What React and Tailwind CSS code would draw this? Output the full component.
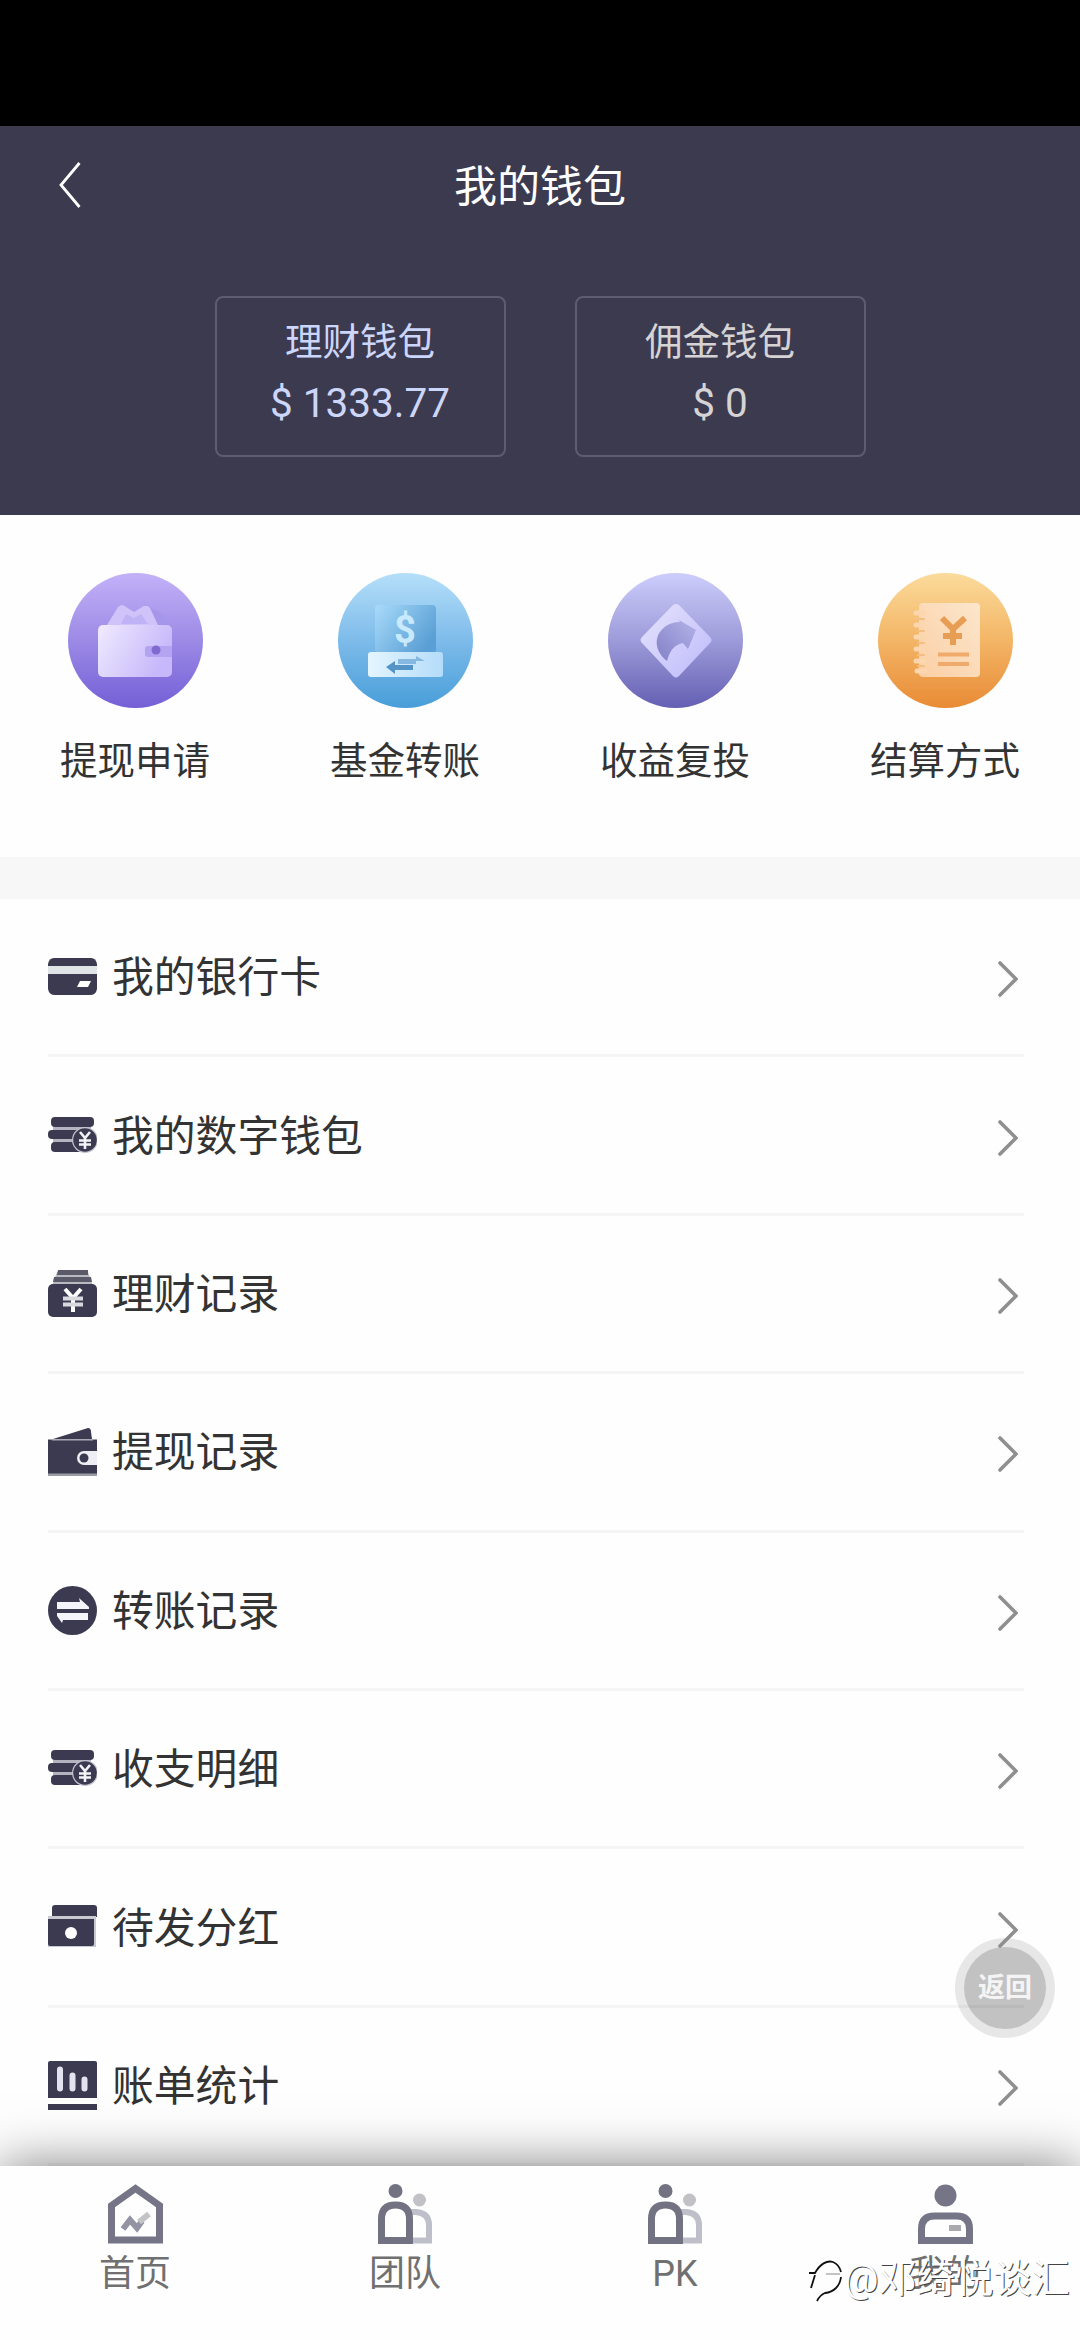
import React from 'react';

const DARK = '#3b3a50';

const WithdrawIcon = () => (
  <svg viewBox="0 0 135 135" className="w-[135px] h-[135px]">
    <defs>
      <linearGradient id="wBg" x1="0" y1="0" x2="0" y2="1">
        <stop offset="0" stopColor="#c3b1f8" />
        <stop offset="0.5" stopColor="#9c8ae6" />
        <stop offset="1" stopColor="#745fd6" />
      </linearGradient>
      <linearGradient id="wBody" x1="0" y1="0" x2="1" y2="0.4">
        <stop offset="0" stopColor="#f0ebff" />
        <stop offset="1" stopColor="#c6b8fa" />
      </linearGradient>
    </defs>
    <circle cx="67.5" cy="67.5" r="67.5" fill="url(#wBg)" />
    <path d="M76 31l20 11 4 9H84z" fill="#a696ea" />
    <path d="M39 52l11-18q4-4 8 0l8 5 8-5q5-3 8 1l8 17z" fill="#cfc3fa" />
    <path d="M53 51l5-10 8 4 7-4 7 10z" fill="#c0b3f5" />
    <rect x="30" y="52" width="74" height="52" rx="5" fill="url(#wBody)" />
    <path d="M80 73h24v11H80q-3 0-3-3v-5q0-3 3-3z" fill="#b3a3f0" />
    <circle cx="88" cy="77" r="4.5" fill="#8069cf" />
  </svg>
);

const TransferIcon = () => (
  <svg viewBox="0 0 135 135" className="w-[135px] h-[135px]">
    <defs>
      <linearGradient id="tBg" x1="0" y1="0" x2="0" y2="1">
        <stop offset="0" stopColor="#b5dff9" />
        <stop offset="0.5" stopColor="#7dbbea" />
        <stop offset="1" stopColor="#489ed9" />
      </linearGradient>
      <linearGradient id="tCard" x1="0" y1="0" x2="1" y2="0.6">
        <stop offset="0" stopColor="#a9dbfa" />
        <stop offset="1" stopColor="#5a9fd5" />
      </linearGradient>
      <linearGradient id="tBar" x1="0" y1="0" x2="1" y2="0">
        <stop offset="0" stopColor="#e5f5ff" />
        <stop offset="1" stopColor="#b4dcfa" />
      </linearGradient>
    </defs>
    <circle cx="67.5" cy="67.5" r="67.5" fill="url(#tBg)" />
    <rect x="37" y="32" width="61" height="48" rx="4" fill="url(#tCard)" />
    <text
      x="67"
      y="70"
      textAnchor="middle"
      className="font-['Roboto',sans-serif] font-bold text-[38px]"
      fill="#c9eafc"
    >
      $
    </text>
    <rect x="30" y="79" width="75" height="25" rx="3" fill="url(#tBar)" />
    <path d="M48 94l9-6v4h18v5H57v4z" fill="#5594c6" />
    <path d="M60 86h18v-3l9 5h-9v3H60z" fill="#86b9e2" />
  </svg>
);

const ReinvestIcon = () => (
  <svg viewBox="0 0 135 135" className="w-[135px] h-[135px]">
    <defs>
      <linearGradient id="rBg" x1="0" y1="0" x2="0" y2="1">
        <stop offset="0" stopColor="#cdcdfc" />
        <stop offset="0.5" stopColor="#9d9bd9" />
        <stop offset="1" stopColor="#645fb3" />
      </linearGradient>
      <linearGradient id="rBox" x1="0" y1="0" x2="1" y2="1">
        <stop offset="0" stopColor="#e6e4fc" />
        <stop offset="1" stopColor="#bdb9fb" />
      </linearGradient>
      <linearGradient id="rArrow" x1="0" y1="1" x2="1" y2="0">
        <stop offset="0" stopColor="#8480c6" />
        <stop offset="1" stopColor="#b3b3e8" />
      </linearGradient>
    </defs>
    <circle cx="67.5" cy="67.5" r="67.5" fill="url(#rBg)" />
    <path
      d="M65 32q3-2 6 0l31 32q3 3 0 6l-31 33q-3 3-6 0L34 70q-3-3 0-6z"
      fill="url(#rBox)"
    />
    <path d="M59 88C46 78 45 62 58 53q6-4 14-4l-1-2 17 10-8 19-5-6q-12 2-16 18z" fill="url(#rArrow)" />
  </svg>
);

const SettleIcon = () => (
  <svg viewBox="0 0 135 135" className="w-[135px] h-[135px]">
    <defs>
      <linearGradient id="sBg" x1="0" y1="0" x2="0" y2="1">
        <stop offset="0" stopColor="#fbdb9b" />
        <stop offset="0.5" stopColor="#f3b566" />
        <stop offset="1" stopColor="#e98b35" />
      </linearGradient>
      <linearGradient id="sBook" x1="1" y1="0" x2="0" y2="1">
        <stop offset="0" stopColor="#fce6cc" />
        <stop offset="1" stopColor="#fbcfa5" />
      </linearGradient>
    </defs>
    <circle cx="67.5" cy="67.5" r="67.5" fill="url(#sBg)" />
    <rect x="41" y="30" width="61" height="74" rx="4" fill="url(#sBook)" />
    <g stroke="#fbd6ae" strokeWidth="5" strokeLinecap="round">
      <path d="M38 40h8M38 52h8M38 64h8M38 76h8M38 88h8M39 98h8" />
    </g>
    <g stroke="#f5bf83" strokeWidth="2" strokeLinecap="round">
      <path d="M40 46h6M40 58h6M40 70h6M40 82h6M40 93h6" />
    </g>
    <path
      d="M64 45l11 11 12-11M75 56v16M65 63h19"
      fill="none"
      stroke="#e79d54"
      strokeWidth="6"
    />
    <path d="M60 81.5h31M60 91h31" stroke="#f0ab6c" strokeWidth="4" />
  </svg>
);

const CardIcon = () => (
  <svg viewBox="0 0 49 49" className="w-[49px] h-[49px] shrink-0">
    <path d="M0 12q1-6 6-6h37q5 0 6 6v2H0z" fill={DARK} />
    <path d="M0 22h49v15q-1 6-7 6H7q-6 0-7-6z" fill={DARK} />
    <path d="M0 14h49v8H0z" fill="#dfe5e6" />
    <path d="M32 29h11l-3 6H29z" fill="#fff" />
  </svg>
);

const CoinsIcon = () => (
  <svg viewBox="0 0 49 49" className="w-[49px] h-[49px] shrink-0">
    <path d="M5 12h38v26H5z" fill="#b4b4c0" />
    <rect x="3" y="6" width="43" height="10" rx="4" fill={DARK} />
    <rect x="0" y="19" width="38" height="9" rx="4" fill={DARK} />
    <rect x="3" y="31" width="38" height="10" rx="4" fill={DARK} />
    <circle cx="37" cy="29" r="13" fill="#c4c4d0" />
    <circle cx="37" cy="29" r="11.800" fill={DARK} />
    <path d="M32 21l5 6 5-6M37 27v11M31 29.500h12M31 33.500h12" fill="none" stroke="#f2f2f7" strokeWidth="2.600" />
  </svg>
);

const FinanceIcon = () => (
  <svg viewBox="0 0 49 49" className="w-[49px] h-[49px] shrink-0">
    <path d="M9 3h31l5 14H4z" fill="#b9b9c2" />
    <path d="M10 1h30v5H9zM6 8h37l1 5H5z" fill="#5b5a69" />
    <rect x="0" y="15" width="49" height="33" rx="5" fill={DARK} />
    <path d="M17 20l8 9 8-9M25 28v15" fill="none" stroke="#fff" strokeWidth="4" />
    <path d="M15 29.500h20M15 35.500h20" stroke="#d8d8df" strokeWidth="4" />
  </svg>
);

const PurseIcon = () => (
  <svg viewBox="0 0 49 49" className="w-[49px] h-[49px] shrink-0">
    <path d="M5 12L40 1q3 0 3 4l1 7z" fill={DARK} />
    <path d="M0 12.500h49V49H0z" fill={DARK} />
    <path d="M4 12h41v1.500H4z" fill="#a9a9b5" />
    <path d="M0 46.500h49v2.500H0z" fill="#9b9ba3" />
    <path d="M49 24H36a7 7 0 0 0 0 14h13z" fill="#eeeef4" />
    <circle cx="36" cy="31" r="4.500" fill={DARK} />
  </svg>
);

const SwapIcon = () => (
  <svg viewBox="0 0 49 49" className="w-[49px] h-[49px] shrink-0">
    <circle cx="24.500" cy="24.500" r="24.500" fill={DARK} />
    <path d="M9 16h23l-1-4 10 9v2H9zM9 27h31v7H15l-1 3-5-7z" fill="#f4f4fa" />
  </svg>
);

const PendingIcon = () => (
  <svg viewBox="0 0 49 49" className="w-[49px] h-[49px] shrink-0">
    <path d="M4 5q0-3 3-3h39q3 0 3 3v9H4z" fill={DARK} />
    <path d="M0 13h48v31H0z" fill="#c9c9d2" />
    <path d="M0 16h46v25q0 2-2 2H2q-2 0-2-2z" fill={DARK} />
    <circle cx="23" cy="30" r="6" fill="#fff" />
  </svg>
);

const StatsIcon = () => (
  <svg viewBox="0 0 49 49" className="w-[49px] h-[49px] shrink-0">
    <path d="M0 2q0-2 2-2h45q2 0 2 2v35H0zM0 43h49v6H0z" fill={DARK} />
    <path d="M12 8.500v19M24.500 14.500v13M36.500 18.500v9" stroke="#e3e3f0" strokeWidth="6" strokeLinecap="round" />
  </svg>
);

const HomeIcon = () => (
  <svg viewBox="0 0 55 60" className="w-[55px] h-[60px]">
    <path d="M3.500 21.500L27.500 4.500 51.500 21.500V56h-48z" fill="none" stroke="#767587" strokeWidth="7" />
    <path d="M15 45l7-9 7 8 5-7" fill="none" stroke="#9493a4" strokeWidth="6" />
    <path d="M31 38l10-8" stroke="#c4c4c8" strokeWidth="6" />
  </svg>
);

const TeamIcon = () => (
  <svg viewBox="0 0 55 60" className="w-[55px] h-[60px]">
    <circle cx="41.500" cy="16" r="6.500" fill="#c1c1c6" />
    <path d="M32 28h6q13 1 13 13v15.500H32" fill="none" stroke="#bfbfc9" strokeWidth="6" />
    <circle cx="17.500" cy="7" r="7" fill="#737283" />
    <path d="M3.500 56.500V35q0-14 14-14t14 14v21.500z" fill="#fff" stroke="#737283" strokeWidth="7" />
  </svg>
);

const MineIcon = () => (
  <svg viewBox="0 0 55 60" className="w-[55px] h-[60px]">
    <circle cx="27.500" cy="11.500" r="11" fill="#767587" />
    <path d="M3.500 56.500V45q0-13 13-13h22q13 0 13 13v11.500z" fill="none" stroke="#767587" strokeWidth="7" />
    <path d="M31 44h12" stroke="#a9a9ae" strokeWidth="6" />
  </svg>
);

const Chevron = () => (
  <svg viewBox="0 0 20 36" className="z-20 mt-[5px] w-5 h-9 shrink-0">
    <path d="M2 2l16 16L2 34" fill="none" stroke="#8f8f8f" strokeWidth="3.600" strokeLinecap="round" />
  </svg>
);

const wallets = [
  { name: '理财钱包', amount: '$ 1333.77', color: 'text-[#ccd6fa]' },
  { name: '佣金钱包', amount: '$ 0', color: 'text-[#d5d3d4]' },
];

const actions = [
  { name: '提现申请', icon: WithdrawIcon },
  { name: '基金转账', icon: TransferIcon },
  { name: '收益复投', icon: ReinvestIcon },
  { name: '结算方式', icon: SettleIcon },
];

const menu = [
  { name: '我的银行卡', icon: CardIcon },
  { name: '我的数字钱包', icon: CoinsIcon },
  { name: '理财记录', icon: FinanceIcon },
  { name: '提现记录', icon: PurseIcon },
  { name: '转账记录', icon: SwapIcon },
  { name: '收支明细', icon: CoinsIcon },
  { name: '待发分红', icon: PendingIcon },
  { name: '账单统计', icon: StatsIcon },
];

const tabs = [
  { name: '首页', icon: HomeIcon },
  { name: '团队', icon: TeamIcon },
  { name: 'PK', icon: TeamIcon },
  { name: '我的', icon: MineIcon },
];

const App = () => {
  return (
    <div className="relative w-[1080px] h-[2340px] overflow-hidden bg-[#fefefe] flex flex-col font-['Roboto','Noto_Sans_CJK_SC',sans-serif]">
      {/* Status bar */}
      <div className="h-[126px] bg-black shrink-0" />

      {/* Header */}
      <header className="h-[389px] shrink-0 bg-[#3c3a4f]">
        <div className="grid grid-cols-[1fr_auto_1fr] items-center h-[120px] px-[59px]">
          <svg viewBox="0 0 22 46" className="w-[22px] h-[46px] mb-[3px]">
            <path d="M20.500 1L2 23l18.500 22" fill="none" stroke="#fff" strokeWidth="2.800" />
          </svg>
          <h1 className="text-[43px] leading-[60px] pt-[2px] text-white">我的钱包</h1>
        </div>
        <div className="flex justify-center gap-[69px] pt-[50px]">
          {wallets.map((wallet) => (
            <div
              key={wallet.name}
              className={`w-[291px] h-[161px] border-2 border-[#5d5c70] rounded-lg flex flex-col items-center pt-[14px] ${wallet.color}`}
            >
              <span className="text-[37.500px] leading-[60px]">{wallet.name}</span>
              <span className="text-[40.500px] leading-[62px]">{wallet.amount}</span>
            </div>
          ))}
        </div>
      </header>

      {/* Quick actions */}
      <section className="h-[342px] shrink-0 grid grid-cols-4 pt-[58px]">
        {actions.map((action) => {
          const Icon = action.icon;
          return (
            <div key={action.name} className="flex flex-col items-center gap-[23px]">
              <Icon />
              <span className="text-[37.500px] leading-[60px] text-[#333]">{action.name}</span>
            </div>
          );
        })}
      </section>

      <div className="h-[42px] shrink-0 bg-[#f7f7f7]" />

      {/* Menu list */}
      <ul className="flex-1 min-h-0 pl-12 pr-14">
        {menu.map((item) => {
          const Icon = item.icon;
          return (
            <li
              key={item.name}
              className="flex items-center h-[158.400px] border-b-3 border-[#f5f5f5] pr-[6px]"
            >
              <Icon />
              <span className="flex-1 ml-[15px] pt-[3px] text-[41.800px] leading-[60px] text-[#333]">{item.name}</span>
              <Chevron />
            </li>
          );
        })}
      </ul>

      {/* Floating back button */}
      <button className="absolute z-10 left-[955px] top-[1938px] w-[100px] h-[100px] rounded-full bg-black/9 flex items-center justify-center">
        <span className="w-[82px] h-[82px] rounded-full bg-black/16 flex items-center justify-center text-[27px] font-bold text-[#f4f4f4]">
          返回
        </span>
      </button>

      {/* Tab bar */}
      <nav className="relative z-30 h-[174px] shrink-0 bg-[#fefefe] grid grid-cols-4 pt-[18px] shadow-[0_0_50px_rgba(0,0,0,0.5)]">
        {tabs.map((tab) => {
          const Icon = tab.icon;
          return (
            <div key={tab.name} className="flex flex-col items-center">
              <Icon />
              <span className="pt-[2px] text-[36px] leading-[56px] text-[#707070]">{tab.name}</span>
            </div>
          );
        })}
      </nav>

      {/* Signature */}
      <div className="absolute z-40 left-[808px] top-[2251px] flex items-center h-[56px]">
        <svg viewBox="0 0 36 44" className="w-[36px] h-[44px] mt-[6px]">
          <path
            d="M1 13h6C12 4 19 0 25 2c5 2 7 6 8 10M7 15L3 28M33 17c-1 9-7 15-16 16q-5 2-8 8"
            fill="none"
            stroke="#111"
            strokeWidth="1.800"
          />
          <path d="M18 14h14" stroke="#888" strokeWidth="1" />
        </svg>
        <span className="text-[38.300px] leading-[56px] text-white whitespace-nowrap [text-shadow:1px_1px_0_#444]">
          @邓绮悦谈汇
        </span>
      </div>
    </div>
  );
};

export default App;
